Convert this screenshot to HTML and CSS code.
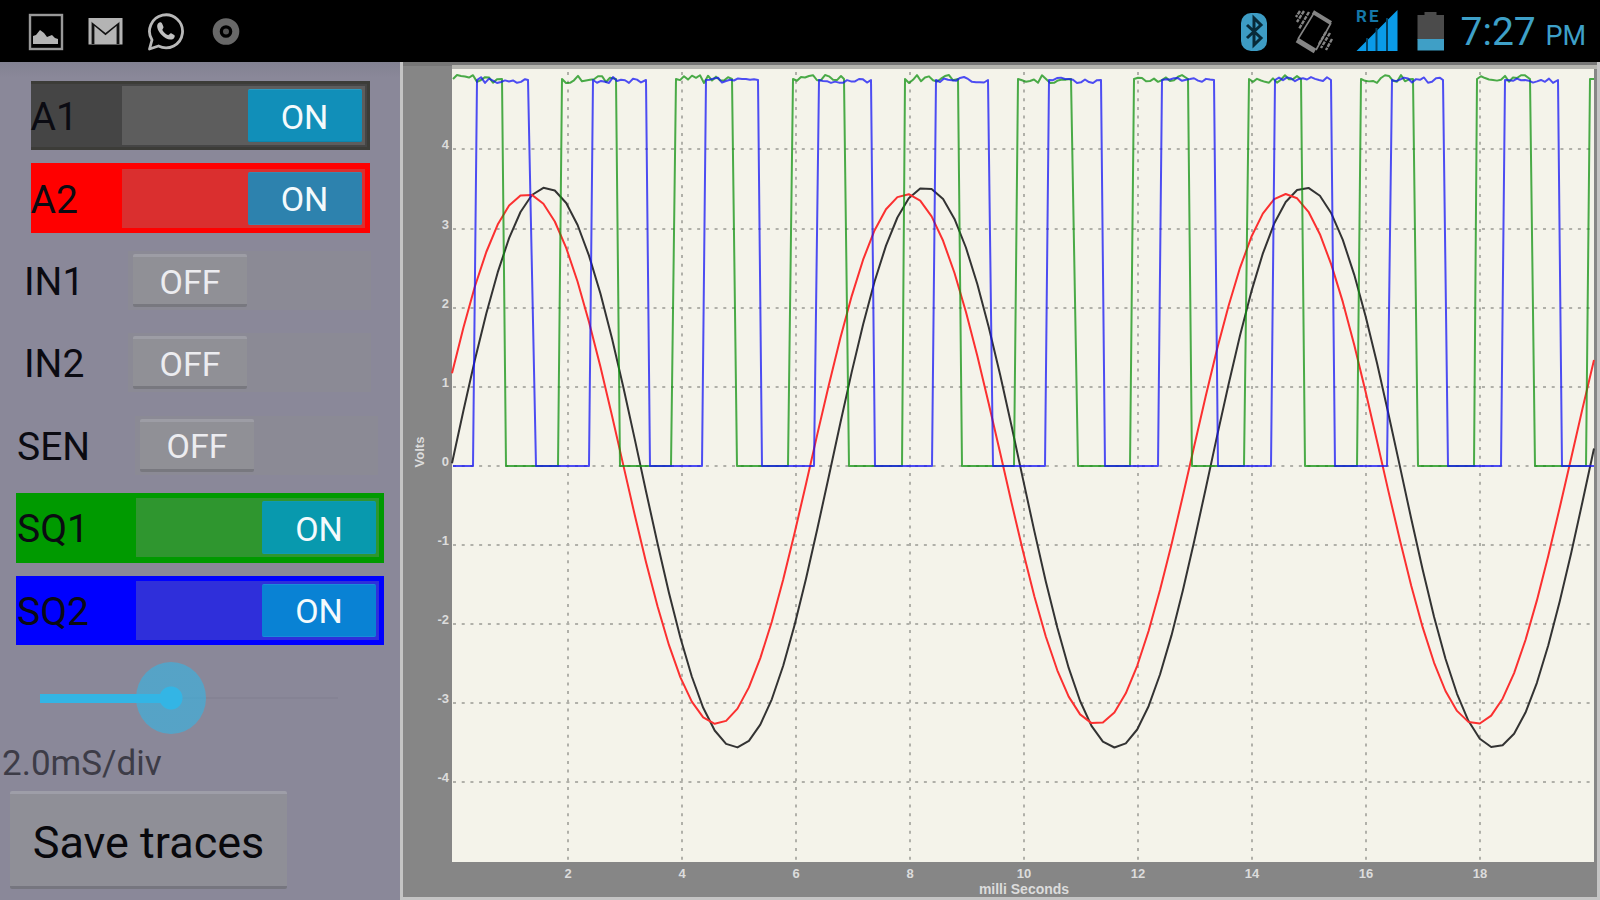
FILE: index.html
```html
<!DOCTYPE html>
<html lang="en">
<head>
<meta charset="utf-8">
<title>Oscilloscope</title>
<link rel="stylesheet" href="styles.css">
</head>
<body>
<header class="status">
  <div class="status-group notices">
    <svg class="icon" width="36" height="42" viewBox="28 10 36 42" aria-hidden="true">
      <rect x="30" y="15" width="32" height="34" fill="none" stroke="#999" stroke-width="2.4"/>
      <path d="M33 44V36l3-1 4-5 4 3 3 4 5-2 3 3 3 1v5z" fill="#b4b4b4"/>
    </svg>
    <svg class="icon" width="36" height="42" viewBox="88 10 36 42" aria-hidden="true">
      <rect x="88.500" y="18" width="34" height="26.500" fill="#b4b4b4"/>
      <path d="M93 44V23l12.500 10.500L118 23v21" fill="none" stroke="#111" stroke-width="2.800"/>
      <path d="M91 19.500l14.500 11.500L120 19.500" fill="none" stroke="#b4b4b4" stroke-width="3"/>
    </svg>
    <svg class="icon" width="36" height="42" viewBox="148 10 36 42" aria-hidden="true">
      <path d="M149.500 49l2.500-9a16.500 16.500 0 1 1 6.500 6z" fill="none" stroke="#b8b8b8" stroke-width="2.800" stroke-linejoin="round"/>
      <path d="M158 23.500c2-2 3.500-1.500 4.300.5l1.200 3c.4 1.200-1.700 2.200-1 3.200 1.200 2.200 3 3.800 5.300 4.900 1.200.5 2.200-2.300 3.400-1.800l3 1.700c1.200.7.400 3-1 3.900-3.500 2-8.500-.7-11.500-3.900-3.200-3.200-6-8.500-3.700-11.500z" fill="#c0c0c0"/>
    </svg>
    <svg class="icon" width="36" height="42" viewBox="208 10 36 42" aria-hidden="true">
      <circle cx="226" cy="31.500" r="9.800" fill="none" stroke="#686868" stroke-width="7"/>
      <circle cx="226" cy="31.500" r="3" fill="#555"/>
    </svg>
  </div>
  <div class="status-group system">
    <svg class="icon" width="38" height="46" viewBox="1236 8 38 46" aria-hidden="true">
      <rect x="1241" y="13" width="26" height="38" rx="10" fill="#3d9cc4"/>
      <path d="M1247 25l14 13-7 7V18l7 7-14 13" fill="none" stroke="#082a38" stroke-width="3"/>
    </svg>
    <svg class="icon" width="48" height="46" viewBox="1290 8 48 46" aria-hidden="true">
      <g fill="none" stroke="#858585">
        <path d="M1313 12l18 11" stroke-width="4"/>
        <path d="M1297 40l18 11" stroke-width="5"/>
        <path d="M1314 13l-16 26M1331 23l-15 27" stroke-width="1.600"/>
        <path d="M1304 11l-7 11M1309 12l-10 17M1300 11l-4 6M1330 33l-9 15M1332 39l-6 11M1326 32l-7 12" stroke-width="2.400" stroke-dasharray="4 1"/>
      </g>
    </svg>
    <svg class="icon" width="46" height="62" viewBox="1354 0 46 62" aria-hidden="true">
      <path d="M1397.500 10v41h-41z" fill="#0a9be8"/>
      <path d="M1367 38v13M1376.500 28v23M1387 18v33" stroke="#04405f" stroke-width="2"/>
      <text class="roaming" x="1356" y="22">R</text>
      <text class="roaming" x="1369" y="22">E</text>
    </svg>
    <svg class="icon" width="29" height="46" viewBox="1416 8 29 46" aria-hidden="true">
      <path d="M1417.500 15h7v-3h12v3h7.500v25h-26.500z" fill="#4b4b4b"/>
      <rect x="1417.500" y="39" width="26.500" height="11.500" fill="#3f9fc6"/>
    </svg>
    <time class="clock" datetime="19:27">7:27 <span class="meridiem">PM</span></time>
  </div>
</header>

<main class="workspace">
  <section class="controls" aria-label="Channel controls">
    <div class="channels">
      <div class="channel analog a1"><label for="a1">A1</label><span class="switch on"><input type="checkbox" id="a1" checked><span class="thumb">ON</span></span></div>
      <div class="channel analog a2"><label for="a2">A2</label><span class="switch on"><input type="checkbox" id="a2" checked><span class="thumb">ON</span></span></div>
      <div class="channel digital"><label for="in1">IN1</label><span class="switch"><input type="checkbox" id="in1"><span class="thumb">OFF</span></span></div>
      <div class="channel digital"><label for="in2">IN2</label><span class="switch"><input type="checkbox" id="in2"><span class="thumb">OFF</span></span></div>
      <div class="channel sensor"><label for="sen">SEN</label><span class="switch"><input type="checkbox" id="sen"><span class="thumb">OFF</span></span></div>
      <div class="channel square sq1"><label for="sq1">SQ1</label><span class="switch on"><input type="checkbox" id="sq1" checked><span class="thumb">ON</span></span></div>
      <div class="channel square sq2"><label for="sq2">SQ2</label><span class="switch on"><input type="checkbox" id="sq2" checked><span class="thumb">ON</span></span></div>
    </div>
    <input class="timebase" id="timebase" type="range" min="0" max="100" value="44">
    <label class="timebase-label" for="timebase">2.0mS/div</label>
    <button class="save" type="button">Save traces</button>
  </section>

  <section class="scope" aria-label="Traces">
    <svg class="chart" id="chart" viewBox="403 62 1194 835"></svg>
  </section>
</main>
<script src="chart.js"></script>
</body>
</html>
```

FILE: styles.css
```css
* {
  box-sizing: border-box;
}

body {
  margin: 0;
  min-height: 100vh;
  display: flex;
  flex-direction: column;
  background: #8a8899;
  font-family: Roboto, "Liberation Sans", sans-serif;
  color: #0b0b12;
}

/* Status bar */
.status {
  height: 62px;
  padding: 0 14px 0 28px;
  display: flex;
  justify-content: space-between;
  background: #000;
}

.status-group {
  display: flex;
  align-items: center;
}

.notices {
  gap: 24px;
}

.system {
  gap: 16px;
}

.icon {
  display: block;
}

.roaming {
  font-size: 17px;
  font-weight: 700;
  fill: #1577a8;
}

.clock {
  padding-top: 6px;
  font-size: 39px;
  line-height: 56px;
  color: #3ea0c8;
  white-space: nowrap;
}

.meridiem {
  font-size: 27px;
}

/* Layout */
.workspace {
  flex: 1;
  display: grid;
  grid-template-columns: 400px 1fr;
}

.controls {
  padding-top: 19px;
  display: flex;
  flex-direction: column;
  align-items: flex-start;
  background: linear-gradient(#828292, #8a8899 16px);
}

/* Channel switches */
.channels {
  width: 100%;
  height: 564px;
  display: grid;
  grid-auto-rows: 1fr;
  gap: 13px;
  justify-items: center;
}

.channel {
  display: flex;
  align-items: center;
  padding-right: 5px;
  font-size: 39px;
}

.channel label {
  flex: 1;
  padding-top: 3px;
}

.analog {
  width: 339px;
}

.digital {
  width: 352px;
}

.sensor {
  width: 366px;
}

.square {
  width: 368px;
  padding-left: 1px;
}

.a1 {
  background: #454545;
  border: 3px solid #3c3c38;
  border-left: 0;
  padding-right: 2px;
}

.a2 {
  background: #f00;
}

.sq1 {
  background: #009a00;
}

.sq2 {
  background: #00f;
}

.switch {
  position: relative;
  width: 243px;
  height: 59px;
  padding: 3px 3px 3px 5px;
  display: flex;
  background: rgba(144, 144, 144, 0.3);
}

.switch.on {
  justify-content: flex-end;
  background: rgba(144, 144, 144, 0.33);
}

.switch input {
  position: absolute;
  inset: 0;
  width: 100%;
  height: 100%;
  margin: 0;
  opacity: 0;
}

.thumb {
  width: 114px;
  padding-top: 2px;
  display: flex;
  align-items: center;
  justify-content: center;
  font-size: 34px;
  color: #ececf0;
  background: #909096;
  border-top: 3px solid #9d9da5;
  border-bottom: 3px solid #78787f;
  border-radius: 2px;
}

.on .thumb {
  color: #f4fafc;
  background: #118fb9;
  border-top: 1px solid #2b9ac0;
  border-bottom: 1px solid #0d84ab;
}

.a2 .thumb {
  background: #2d82ae;
  border-color: #3a88b0;
}

.sq1 .thumb {
  background: #0899ae;
  border-color: #109ab0;
}

.sq2 .thumb {
  background: #0982d4;
  border-color: #1a8adb;
}

/* Time base */
.timebase {
  appearance: none;
  width: 368px;
  height: 86px;
  margin: 10px 0 0 5px;
  background: transparent;
}

.timebase::-webkit-slider-runnable-track {
  height: 72px;
  background:
    linear-gradient(#33b5e5, #33b5e5) 35px center / 131px 9px no-repeat,
    linear-gradient(#858394, #858394) 35px center / 298px 2px no-repeat;
}

.timebase::-webkit-slider-thumb {
  appearance: none;
  width: 70px;
  height: 72px;
  border-radius: 50%;
  background: radial-gradient(circle, #33b5e5 11px, rgba(51, 181, 229, 0.6) 12px);
}

.timebase-label {
  padding: 2px 0 0 2px;
  font-size: 35px;
  line-height: 42px;
  color: #3d3c47;
}

.save {
  width: 277px;
  height: 98px;
  margin: 6px 0 0 10px;
  padding: 4px 0 0;
  font: inherit;
  font-size: 45px;
  color: #08080c;
  background: #8f8f97;
  border: 0;
  border-top: 3px solid #9e9ea8;
  border-bottom: 3px solid #76767f;
  border-radius: 2px;
}

/* Scope */
.scope {
  display: flex;
  background: #868686;
  border: solid #c4c4c4;
  border-width: 0 3px 3px;
}

.chart {
  width: 100%;
  height: 100%;
  display: block;
}

.plot-area {
  fill: #f4f3ea;
}

.grid-line {
  stroke: #b0b0a9;
  stroke-width: 2;
  stroke-dasharray: 3 5.72;
}

.trace {
  fill: none;
  stroke-width: 2;
  stroke-linejoin: round;
}

.trace-a1 {
  stroke: #333;
}

.trace-a2 {
  stroke: #fb3030;
}

.trace-sq1 {
  stroke: #109210;
  opacity: 0.75;
}

.trace-sq2 {
  stroke: #1414f4;
  opacity: 0.75;
}

.axis-text {
  font-family: "Liberation Sans", Arial, sans-serif;
  font-size: 13px;
  font-weight: 700;
  fill: #dcdcdc;
}

.axis-title {
  font-size: 14px;
}
```

FILE: chart.js
```js
const NS = 'http://www.w3.org/2000/svg';
const chart = document.getElementById('chart');

const LEFT = 452, RIGHT = 1594, TOP = 69, BOTTOM = 862;
const X0 = 453.6, X_UNIT = 57;
const Y0 = 465.8, Y_UNIT = 79.1;

function add(name, attrs, text) {
  const el = document.createElementNS(NS, name);
  for (const key in attrs) el.setAttribute(key, attrs[key]);
  if (text !== undefined) el.textContent = text;
  chart.appendChild(el);
}

// Plot frame and background
add('rect', { x: 403, y: 62, width: 1194, height: 4, fill: '#777' });
add('rect', { x: 452, y: 65, width: 1145, height: 4, fill: '#b5b5b0' });
add('rect', { x: LEFT, y: TOP, width: RIGHT - LEFT, height: BOTTOM - TOP, class: 'plot-area' });

// Grid and tick labels
for (let v = -4; v <= 4; v++) {
  const y = Math.round(Y0 - v * Y_UNIT);
  add('line', { x1: LEFT + 1, y1: y, x2: RIGHT, y2: y, class: 'grid-line' });
  add('text', { x: 449, y: y, 'text-anchor': 'end', class: 'axis-text' }, v);
}
for (let t = 2; t <= 18; t += 2) {
  const x = Math.round(X0 + t * X_UNIT);
  add('line', { x1: x, y1: TOP + 3, x2: x, y2: BOTTOM, class: 'grid-line' });
  add('text', { x: x, y: 878, 'text-anchor': 'middle', class: 'axis-text' }, t);
}
add('text', { x: 1024, y: 894, 'text-anchor': 'middle', class: 'axis-text axis-title' }, 'milli Seconds');
add('text', { transform: 'translate(424 452) rotate(-90)', 'text-anchor': 'middle', class: 'axis-text' }, 'Volts');

// Sine traces
function sine(peak, centre, amplitude, period, cls) {
  const points = [];
  for (let x = LEFT; x <= RIGHT + 0.1; x += 11.42) {
    const y = centre - amplitude * Math.cos((x - peak) / period * 2 * Math.PI);
    points.push(x.toFixed(1) + ',' + y.toFixed(1));
  }
  add('polyline', { points: points.join(' '), class: 'trace ' + cls });
}

// Square traces: edges alternate, each given as its first and last x
function square(startsHigh, edges, high, noise, seed, cls) {
  const low = 466;
  const points = [];
  let up = startsHigh, x = LEFT + 1;
  const random = () => (seed = (seed * 16807) % 2147483647) / 2147483647 - 0.5;
  const level = to => {
    points.push([x, up ? high : low]);
    if (up) for (let i = x + 4; i < to - 2; i += 4) points.push([i, high + random() * noise]);
    points.push([to, up ? high : low]);
  };
  for (const [from, to] of edges) {
    level(from);
    up = !up;
    x = to;
  }
  level(RIGHT);
  add('polyline', { points: points.map(p => p.join(',')).join(' '), class: 'trace ' + cls });
}

sine(546, 467.5, 280, 379.6, 'trace-a1');
sine(527, 459, 265, 379.6, 'trace-a2');
square(true, [
  [502, 506], [558, 562], [616, 620], [671, 676], [732, 737], [788, 793], [844, 849],
  [902, 905], [958, 962], [1014, 1018], [1071, 1078], [1130, 1134], [1188, 1192],
  [1244, 1249], [1301, 1305], [1357, 1361], [1413, 1418], [1474, 1477], [1530, 1535], [1586, 1590]
], 79, 8, 77, 'trace-sq1');
square(false, [
  [473, 477], [528, 536], [589, 593], [646, 650], [702, 706], [758, 762], [814, 819],
  [871, 875], [932, 936], [988, 993], [1045, 1049], [1101, 1105], [1158, 1162],
  [1214, 1218], [1271, 1275], [1331, 1335], [1387, 1392], [1443, 1448], [1501, 1505], [1558, 1562]
], 80, 6, 4242, 'trace-sq2');
```
